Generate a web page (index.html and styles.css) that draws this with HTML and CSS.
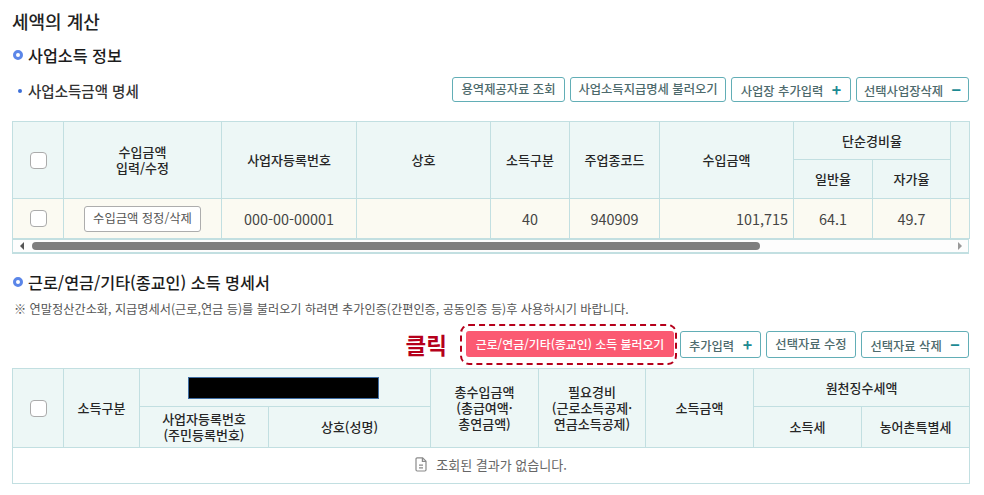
FILE: index.html
```html
<!DOCTYPE html>
<html lang="ko">
<head>
<meta charset="utf-8">
<title>세액의 계산</title>
<link rel="stylesheet" href="styles.css">
</head>
<body>
<main class="page">
  <h1 class="title">세액의 계산</h1>
  <h2 class="heading heading-first"><span class="ring"></span>사업소득 정보</h2>
  <div class="toolbar toolbar-first">
    <h3 class="subheading"><span class="dot"></span>사업소득금액 명세</h3>
    <div class="actions">
      <button class="btn b1">용역제공자료 조회</button>
      <button class="btn b2">사업소득지급명세 불러오기</button>
      <button class="btn b3">사업장 추가입력 <span class="sign">+</span></button>
      <button class="btn b4">선택사업장삭제 <span class="sign">−</span></button>
    </div>
  </div>
  <table class="grid grid-a">
    <colgroup><col class="a1"><col class="a2"><col class="a3"><col class="a4"><col class="a5"><col class="a6"><col class="a7"><col class="a8"><col class="a9"><col class="a10"></colgroup>
    <thead>
      <tr class="h1">
        <th rowspan="2"><input type="checkbox" class="check" aria-label="전체선택"></th>
        <th rowspan="2">수입금액<br>입력/수정</th>
        <th rowspan="2">사업자등록번호</th>
        <th rowspan="2">상호</th>
        <th rowspan="2">소득구분</th>
        <th rowspan="2">주업종코드</th>
        <th rowspan="2">수입금액</th>
        <th colspan="2">단순경비율</th>
        <th rowspan="2"></th>
      </tr>
      <tr class="h2"><th>일반율</th><th>자가율</th></tr>
    </thead>
    <tbody>
      <tr class="row-a">
        <td><input type="checkbox" class="check" aria-label="선택"></td>
        <td><button class="edit">수입금액 정정/삭제</button></td>
        <td>000-00-00001</td>
        <td></td>
        <td>40</td>
        <td>940909</td>
        <td class="num">101,715</td>
        <td>64.1</td>
        <td>49.7</td>
        <td></td>
      </tr>
    </tbody>
  </table>
  <div class="scrollbar">
    <span class="arrow arrow-left"></span>
    <div class="track"><div class="thumb"></div></div>
    <span class="arrow arrow-right"></span>
  </div>

  <h2 class="heading heading-second"><span class="ring"></span>근로/연금/기타(종교인) 소득 명세서</h2>
  <p class="note">※ 연말정산간소화, 지급명세서(근로,연금 등)를 불러오기 하려면 추가인증(간편인증, 공동인증 등)후 사용하시기 바랍니다.</p>
  <div class="toolbar toolbar-second">
    <strong class="click">클릭</strong>
    <div class="highlight"><button class="btn-primary">근로/연금/기타(종교인) 소득 불러오기</button></div>
    <button class="btn b5">추가입력 <span class="sign">+</span></button>
    <button class="btn b6">선택자료 수정</button>
    <button class="btn b7">선택자료 삭제 <span class="sign">−</span></button>
  </div>
  <table class="grid grid-b">
    <colgroup><col class="c1"><col class="c2"><col class="c3"><col class="c4"><col class="c5"><col class="c6"><col class="c7"><col class="c8"><col class="c9"></colgroup>
    <thead>
      <tr class="h3">
        <th rowspan="2"><input type="checkbox" class="check" aria-label="전체선택"></th>
        <th rowspan="2">소득구분</th>
        <th colspan="2"><div class="redact"></div></th>
        <th rowspan="2">총수입금액<br>(총급여액·<br>총연금액)</th>
        <th rowspan="2">필요경비<br>(근로소득공제·<br>연금소득공제)</th>
        <th rowspan="2">소득금액</th>
        <th colspan="2">원천징수세액</th>
      </tr>
      <tr class="h4">
        <th>사업자등록번호<br>(주민등록번호)</th>
        <th>상호(성명)</th>
        <th>소득세</th>
        <th>농어촌특별세</th>
      </tr>
    </thead>
    <tbody>
      <tr class="row-b">
        <td colspan="9" class="empty">
          <span class="empty-inner">
            <svg class="doc" width="12" height="15" viewBox="0 0 12 15" fill="none" stroke="#8a8a8a" stroke-width="1.2"><path d="M1 2a1.2 1.2 0 0 1 1.2-1.2H7.6L11 4.2V12.8A1.2 1.2 0 0 1 9.800 14H2.200A1.200 1.200 0 0 1 1 12.800Z"/><path d="M7.400 1V4.400H11"/><path d="M4 8.200H8M4 10.800H8"/></svg>
            조회된 결과가 없습니다.
          </span>
        </td>
      </tr>
    </tbody>
  </table>
</main>
</body>
</html>
```

FILE: styles.css
```css
* { box-sizing: border-box; }
html, body { margin: 0; padding: 0; background: #fff; }
body { font-family: "Noto Sans CJK KR", "Noto Sans", sans-serif; color: #2b2b2b; width: 984px; height: 495px; overflow: hidden; }
.page { padding: 0 15px 0 12px; }
h1, h2, h3, p { margin: 0; }

.title { font-size: 18px; font-weight: 500; line-height: 26px; padding-top: 8px; color: #222; }
.heading { display: flex; align-items: center; font-size: 16.200px; font-weight: 500; line-height: 24px; color: #1c1c1c; }
.heading-first { margin-top: 9px; }
.heading-second { margin-top: 16px; }
.ring { width: 10px; height: 10px; border: 3px solid #5b86e8; border-radius: 50%; margin: 0 5px 0 1px; flex: none; }

.toolbar { display: flex; align-items: center; }
.toolbar-first { justify-content: space-between; height: 25px; margin-top: 10px; }
.subheading { display: flex; align-items: center; font-size: 14.500px; font-weight: 500; color: #333; padding-top: 2px; }
.dot { width: 4px; height: 4px; border-radius: 50%; background: #3d6fd8; margin: 0 6px 0 6px; }
.actions { display: flex; gap: 5px; }

.btn { height: 25px; padding: 0; font: 500 12.300px/1 "Noto Sans CJK KR", sans-serif; color: #4d6a6c; background: #fff; border: 1px solid #62aeb6; border-radius: 3px; white-space: nowrap; }
.b1 { width: 113px; }
.b2 { width: 156px; }
.b3 { width: 120px; }
.b4 { width: 113px; }
.b5 { width: 81px; }
.b6 { width: 90px; }
.b7 { width: 108px; }
.sign { color: #1d8a93; font-weight: 700; font-size: 16px; margin-left: 5px; line-height: 1; }

.grid { border-collapse: collapse; table-layout: fixed; width: 957px; font-size: 13px; }
.grid th, .grid td { border: 1px solid #c2dfe1; padding: 0; text-align: center; vertical-align: middle; }
.grid th { background: #edf7f6; font-weight: 500; color: #262626; line-height: 16px; }
.grid td { color: #444; }
.grid-a { margin-top: 19px; }
.a1 { width: 51px; } .a2 { width: 158px; } .a3 { width: 135px; } .a4 { width: 134px; } .a5 { width: 79px; }
.a6 { width: 90px; } .a7 { width: 134px; } .a8 { width: 79px; } .a9 { width: 78px; } .a10 { width: 19px; }
.c1 { width: 51px; } .c2 { width: 76px; } .c3 { width: 129px; } .c4 { width: 162px; } .c5 { width: 108px; }
.c6 { width: 107px; } .c7 { width: 108px; } .c8 { width: 108px; } .c9 { width: 108px; }
.h1 { height: 38px; } .h2 { height: 39px; }
.row-a { height: 40px; }
.row-a td { background: #fbfaf2; font-size: 14.400px; }
.grid td.num { text-align: right; padding-right: 5px; }
.check { appearance: none; display: block; width: 17px; height: 17px; margin: 0 auto; background: #fff; border: 1.500px solid #ababab; border-radius: 4px; }
.edit { width: 117px; height: 26px; padding: 0; font: 400 12.300px/1 "Noto Sans CJK KR", sans-serif; color: #555; background: #fff; border: 1px solid #adadad; border-radius: 3px; }

.scrollbar { display: flex; align-items: center; width: 957px; height: 16px; margin-top: -1px; border: 1px solid #c2dfe1; border-top-width: 2px; border-bottom-width: 2px; background: #fdfdfd; }
.arrow { width: 0; height: 0; border-style: solid; flex: none; border-width: 4px 0; border-color: transparent; }
.arrow-left { border-right: 4px solid #555; margin-left: 7px; }
.arrow-right { border-left: 4px solid #999; margin-right: 6px; }
.track { flex: 1; height: 8px; margin: 0 9px 0 8px; }
.thumb { width: 728px; height: 8px; border-radius: 4px; background: #7e7e7e; }

.note { font-size: 12.200px; line-height: 18px; color: #555; margin: 6px 0 0 2px; white-space: nowrap; }
.toolbar-second { justify-content: flex-end; height: 27px; margin-top: 13px; gap: 5px; }
.toolbar-second .btn { height: 27px; }
.click { font-size: 22.500px; font-weight: 700; color: #b5001b; line-height: 1; margin-right: 8px; }
.highlight { margin: -7px -2px -7px 0; padding: 5px 1px 5px 4px; border: 2.500px dashed #b5001b; border-radius: 9px; height: 41px; }
.btn-primary { display: block; width: 208px; height: 26px; padding: 0; font: 500 11.900px/1 "Noto Sans CJK KR", sans-serif; color: #fff; background: #fb5a72; border: 0; border-radius: 3px; white-space: nowrap; }
.grid-b { margin-top: 10px; }
.h3 { height: 38px; } .h4 { height: 41px; }
.redact { width: 191px; height: 22px; margin: 0 0 0 48px; background: #000; border: 1px solid #3f6da3; }
.row-b { height: 36px; }
.empty { background: #fff; }
.grid td.empty { color: #666; font-size: 13px; }
.empty-inner { display: inline-flex; align-items: center; gap: 9px; }
```
